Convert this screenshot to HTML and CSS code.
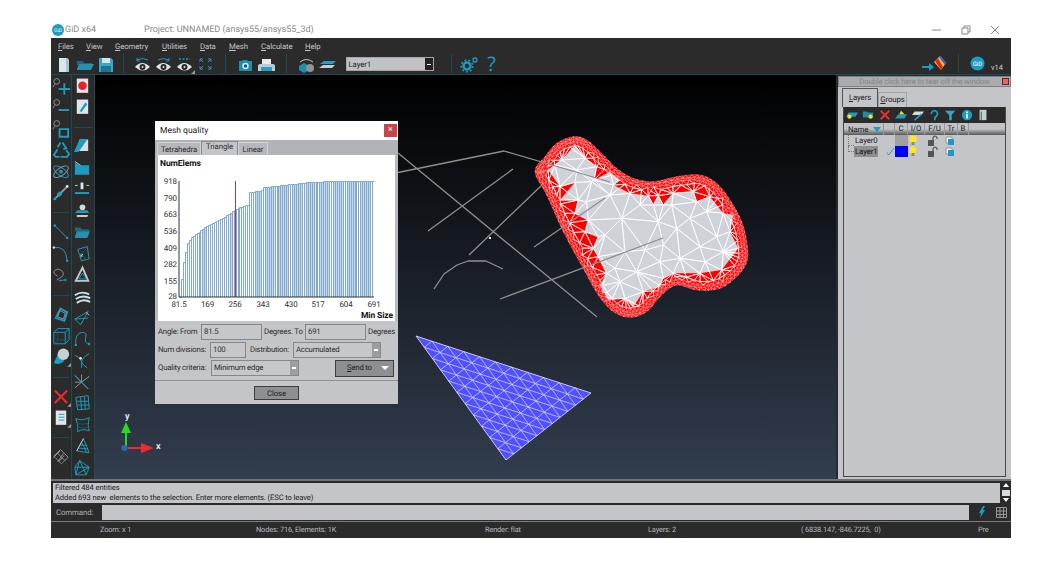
FILE: index.html
```html
<!DOCTYPE html>
<html lang="en">
<head>
<meta charset="utf-8">
<title>GiD x64</title>
<link rel="stylesheet" href="styles.css">
</head>
<body>
<header class="titlebar">
  <svg class="gid-small" viewBox="0 0 12 12"><circle cx="6" cy="6" r="6" fill="#1c9cc0"/><text x="6" y="8" class="gid-t-s">GiD</text></svg>
  <span class="app-name">GiD x64</span>
  <span class="project">Project: UNNAMED (ansys55/ansys55_3d)</span>
  <div class="winctl">
    <svg class="wc" viewBox="0 0 10 10"><path d="M0 5h9" class="wc-l"/></svg>
    <svg class="wc" viewBox="0 0 10 10"><path d="M1 3h6v6H1zM3 3V1h6v6H7" class="wc-l"/></svg>
    <svg class="wc" viewBox="0 0 10 10"><path d="M1 1l8 8M9 1l-8 8" class="wc-l"/></svg>
  </div>
</header>

<div class="app">
  <nav class="menubar">
    <span class="m m-files"><u>F</u>iles</span>
    <span class="m m-view"><u>V</u>iew</span>
    <span class="m m-geo"><u>G</u>eometry</span>
    <span class="m m-util"><u>U</u>tilities</span>
    <span class="m m-data"><u>D</u>ata</span>
    <span class="m m-mesh"><u>M</u>esh</span>
    <span class="m m-calc"><u>C</u>alculate</span>
    <span class="m m-help"><u>H</u>elp</span>
  </nav>

  <div class="toolbar">
    <svg class="ti" viewBox="0 0 21 20"><path d="M6 4h8l2 2v12H6z" fill="#dbe6ea"/><path d="M13 4h1l2 2v12h-3z" fill="#a9c4cf"/></svg>
    <svg class="ti" viewBox="0 0 21 20"><path d="M3 7h6l1 2h8v2H3z" fill="#176a80"/><path d="M3 15l2-5h15l-3 6H3z" fill="#2a8fae"/></svg>
    <svg class="ti" viewBox="0 0 21 20"><path d="M4 4h12l2 2v12H4z" fill="#3aa5c6"/><path d="M7 4h8v5H7z" fill="#d7e3e7"/><path d="M6 12h10v6H6z" fill="#1d7590"/></svg>
    <i class="sep sep-n"></i>
    <svg class="ti" viewBox="0 0 21 20"><path d="M5 6q5-3 11 0" class="s-t"/><path d="M5 4v3h3" class="s-t"/><path d="M3 13q7-8 15 0q-7 7-15 0z" fill="#e3e6e8"/><circle cx="10.500" cy="13" r="3" fill="#2b2b2b"/><circle cx="10.500" cy="13" r="1" fill="#ddd"/></svg>
    <svg class="ti" viewBox="0 0 21 20"><path d="M5 6q5-3 11 0" class="s-t"/><path d="M16 4v3h-3" class="s-t"/><path d="M3 13q7-8 15 0q-7 7-15 0z" fill="#e3e6e8"/><circle cx="10.500" cy="13" r="3" fill="#2b2b2b"/><circle cx="10.500" cy="13" r="1" fill="#ddd"/></svg>
    <svg class="ti" viewBox="0 0 21 20"><path d="M5 5h11" class="s-t s-dot"/><path d="M3 13q7-8 15 0q-7 7-15 0z" fill="#e3e6e8"/><circle cx="10.500" cy="13" r="3" fill="#2b2b2b"/><circle cx="10.500" cy="13" r="1" fill="#ddd"/><path d="M21 16v4h-4z" fill="#9a9a9a"/></svg>
    <svg class="ti" viewBox="0 0 21 20"><path d="M8 8L5 5M5 8V5h3M13 8l3-3M13 5h3v3M8 12l-3 3M5 12v3h3M13 12l3 3M16 12v3h-3" class="s-t"/></svg>
    <i class="sep"></i>
    <svg class="ti" viewBox="0 0 21 20"><path d="M4 7h3l1-1h4l1 1h4v10H4z" fill="#1f8fae"/><circle cx="10.500" cy="12" r="3.200" fill="#dfe8eb"/><circle cx="10.500" cy="12" r="1.700" fill="#16566a"/></svg>
    <svg class="ti" viewBox="0 0 21 20"><path d="M6 5h9v5H6z" fill="#e6eaec"/><path d="M4 10h13q2 0 2 2v5H2v-5q0-2 2-2z" fill="#b8cdd6"/><path d="M5 13h11v4H5z" fill="#2c9dbd"/></svg>
    <i class="sep"></i>
    <svg class="ti" viewBox="0 0 21 20"><path d="M4 8q6-5 13 0" class="s-w"/><path d="M3 12l5-3 5 3v4l-5 3-5-3z" fill="#1f8fae"/><circle cx="14" cy="14" r="4" fill="#8e9498"/></svg>
    <svg class="ti" viewBox="0 0 21 20"><path d="M7 7h12l-3 3H3z" fill="#2a9dbd"/><path d="M6 11h12l-3 3H2z" fill="#b6d2dc"/></svg>
    <div class="tcombo"><span class="tcombo-v">Layer1</span><span class="tcombo-b"></span></div>
    <i class="sep sep-w"></i>
    <svg class="ti" viewBox="0 0 21 20"><circle cx="8" cy="12" r="3.500" fill="none" stroke="#1c9cc0" stroke-width="2.500"/><circle cx="8" cy="12" r="5.800" fill="none" stroke="#1c9cc0" stroke-width="1.500" stroke-dasharray="2 2"/><circle cx="16" cy="6" r="2" fill="none" stroke="#1c9cc0" stroke-width="1.300"/></svg>
    <span class="qmark">?</span>
    <span class="tb-fill"></span>
    <svg class="tb-rain" viewBox="0 0 24 18"><path d="M0 12h10" class="s-t s-2"/><path d="M7 8l5 4-5 4z" fill="#1c9cc0"/><path d="M12 7l6-6 6 7-5 7z" fill="#f0c020"/><path d="M13 6l3-3 5 9-2 3z" fill="#e02828"/><path d="M17 2l2-1 5 7-1 2z" fill="#2c60d8"/></svg>
    <i class="sep sep-r"></i>
    <svg class="tb-gid" viewBox="0 0 16 16"><circle cx="8" cy="8" r="7.500" fill="#1c9cc0"/><text x="8" y="10.300" class="gid-t">GiD</text></svg>
    <span class="ver">v14</span>
  </div>

  <main class="main">
    <div class="col">
      <svg class="li" viewBox="0 0 21 21"><circle cx="6" cy="6" r="3" class="s-g"/><path d="M4 9l-2 3" class="s-g"/><path d="M14 8v12M8 14h12" class="s-t s-2"/></svg>
      <svg class="li" viewBox="0 0 21 21"><circle cx="6" cy="6" r="3" class="s-g"/><path d="M4 9l-2 3" class="s-g"/><path d="M8 14h11" class="s-t s-2"/></svg>
      <svg class="li" viewBox="0 0 21 21"><circle cx="6" cy="5" r="3" class="s-g"/><path d="M4 8l-2 3" class="s-g"/><path d="M9 11h9v8H9z" class="s-t s-2"/></svg>
      <svg class="li" viewBox="0 0 21 21"><path d="M10 3l-3 5M12 3l4 6-3 1M7 10l-4 6 2 2h4M10 18h7l2-3-3-4" class="s-t s-2"/></svg>
      <svg class="li" viewBox="0 0 21 21"><ellipse cx="10.500" cy="10.500" rx="9" ry="4" class="s-t" transform="rotate(35 10.500 10.500)"/><ellipse cx="10.500" cy="10.500" rx="9" ry="4" class="s-g" transform="rotate(-35 10.500 10.500)"/><circle cx="10.500" cy="10.500" r="2" fill="#1c9cc0"/></svg>
      <svg class="li" viewBox="0 0 21 21"><path d="M5 16L16 5" class="s-g s-2"/><circle cx="4" cy="17" r="1.500" fill="#1c9cc0"/><circle cx="17" cy="4" r="1.500" fill="#e0e4e6"/><path d="M9 9l3 3-3 3-3-3z" fill="#1c9cc0"/></svg>
      <i class="hsep"></i>
      <svg class="li" viewBox="0 0 21 21"><path d="M4 4l13 13" class="s-t"/><circle cx="4" cy="4" r="1.300" fill="#1c9cc0"/><circle cx="17" cy="17" r="1.300" fill="#1c9cc0"/></svg>
      <svg class="li" viewBox="0 0 21 21"><path d="M3 4q13-2 14 14" class="s-t"/><circle cx="3" cy="4" r="1.300" fill="#d0d4d6"/><circle cx="17" cy="18" r="1.300" fill="#1c9cc0"/></svg>
      <svg class="li" viewBox="0 0 21 21"><path d="M6 16l5-3q4-3 0-7-4-3-7 0t3 6" class="s-g"/><path d="M8 17l6-1" class="s-t"/><circle cx="15" cy="16" r="1.300" fill="#1c9cc0"/></svg>
      <i class="hsep"></i>
      <svg class="li" viewBox="0 0 21 21"><path d="M10 4l7 4-3 9-9-3z" class="s-t s-2"/><path d="M9 6l6 3-2 6-6-2z" class="s-g"/></svg>
      <svg class="li" viewBox="0 0 21 21"><path d="M3 7h12v12H3zM3 7l4-4h12v12l-4 4M15 7l4-4" class="s-t"/><path d="M7 3v12h12M7 15l-4 4" class="s-dk"/></svg>
      <svg class="li" viewBox="0 0 21 21"><path d="M3 17L8 6l6 9q-5 5-11 2z" fill="#1c9cc0"/><circle cx="13" cy="8" r="6" fill="#c9ced1"/><path d="M21 17v4h-4z" fill="#9a9a9a"/></svg>
      <i class="hsep"></i>
      <svg class="li" viewBox="0 0 21 21"><path d="M4 4l13 13M17 4L4 17" class="s-r"/><path d="M21 17v4h-4z" fill="#9a9a9a"/></svg>
      <svg class="li" viewBox="0 0 21 21"><path d="M5 3h11v15H5z" fill="#dfe5e8"/><path d="M8 7h6M8 10h6M8 13h6" class="s-t"/><path d="M21 17v4h-4z" fill="#9a9a9a"/></svg>
      <i class="hsep"></i>
      <svg class="li" viewBox="0 0 21 21"><path d="M3 10l7-7 8 8-7 7zM6.500 6.500l8 8M9.500 4.500l-7 7M13 7l-6 9M14 9l-6 7" class="s-g"/></svg>
    </div>
    <div class="col col-b">
      <svg class="li" viewBox="0 0 21 21"><path d="M5 3h12v15H5z" fill="#dfe5e8"/><circle cx="11" cy="10.500" r="4.500" fill="#e8202a"/></svg>
      <svg class="li" viewBox="0 0 21 21"><path d="M5 3h12v15H5z" fill="#dfe5e8"/><path d="M8 15l6-9 2 2-6 8z" fill="#1c9cc0"/></svg>
      <i class="hsep"></i>
      <svg class="li" viewBox="0 0 21 21"><path d="M8 3h9v12H4z" fill="#d8dde0"/><path d="M8 3h8l-9 13H2z" fill="#1c9cc0"/></svg>
      <svg class="li" viewBox="0 0 21 21"><path d="M3 5l5 3h10v10H3z" fill="#1c9cc0"/><path d="M3 4l6 4" class="s-w"/></svg>
      <svg class="li" viewBox="0 0 21 21"><path d="M3 6h3M15 6h3" class="s-w"/><path d="M9 3h3v7H9z" fill="#e0e4e6"/><path d="M3 14h15" class="s-t s-2"/></svg>
      <svg class="li" viewBox="0 0 21 21"><circle cx="11" cy="7" r="3" fill="#d5d9db"/><path d="M6 10h10l2 3H3z" fill="#1c9cc0"/><path d="M5 15h12l-1 2H5z" fill="#c8ccce"/></svg>
      <svg class="li" viewBox="0 0 21 21"><path d="M3 6h6l1 2h8v2H3z" fill="#176a80"/><path d="M3 16l2-6h14l-3 7H3z" fill="#2a8fae"/></svg>
      <svg class="li" viewBox="0 0 21 21"><path d="M6 6l10-3 2 13-8 2z" class="s-t"/><circle cx="10" cy="12" r="1.600" fill="#d8dcde"/><path d="M7 9l8 7M15 5l-8 9" class="s-dk"/></svg>
      <svg class="li" viewBox="0 0 21 21"><path d="M11 3L4 17h13z" class="s-w s-2"/><path d="M11 9L7 15h8z" class="s-t"/></svg>
      <svg class="li" viewBox="0 0 21 21"><path d="M3 9q7-5 15-1M4 13q7-5 15-1M5 17q7-5 14-1" class="s-lt s-2"/></svg>
      <svg class="li" viewBox="0 0 21 21"><path d="M3 12L17 4 9 18zM3 12l14-1" class="s-t"/><path d="M15 5l3 3" class="s-w"/></svg>
      <svg class="li" viewBox="0 0 21 21"><path d="M4 17q-1-12 6-13t4 7q0 5 4 5" class="s-t"/><circle cx="4" cy="17" r="1.300" fill="#1c9cc0"/><circle cx="18" cy="16" r="1.300" fill="#1c9cc0"/></svg>
      <svg class="li" viewBox="0 0 21 21"><path d="M3 5q4 1 6 4t1 9M18 3q-4 2-7 6t5 9" class="s-t"/><circle cx="9" cy="8" r="1.500" fill="#e0e4e6"/></svg>
      <svg class="li" viewBox="0 0 21 21"><path d="M3 4l7 7-7 6M10 11l8-6M10 11l7 7M10 11V3M10 11H3" class="s-g"/><path d="M3 4l7 7 7 7M10 11l8-6" class="s-t"/></svg>
      <svg class="li" viewBox="0 0 21 21"><path d="M4 5l13-2 1 14-12 1zM5 9h12M5 13h13M9 4l1 14M13 4l1 13" class="s-t"/></svg>
      <svg class="li" viewBox="0 0 21 21"><path d="M4 4q7 3 14-1-2 8 0 14-7-3-12 1 1-8-2-14z" class="s-t"/><path d="M5 9q7 2 12 0M5 13q7 2 13 0" class="s-dk"/></svg>
      <svg class="li" viewBox="0 0 21 21"><path d="M12 3L5 16l13 2zM9 10h7M7 13l10 1M10 7l5 10" class="s-t"/><path d="M12 3L5 16" class="s-w"/></svg>
      <svg class="li" viewBox="0 0 21 21"><path d="M8 3l10 7-3 8H4l-1-8zM3 10h15M8 3l7 15M8 3L4 18M4 18l14-8" class="s-t"/></svg>
    </div>

    <section class="canvas">
      <svg class="scene" viewBox="95 75 741 404" aria-hidden="true">
        <g id="blob"></g>
        <g id="tri"></g>
        <path class="edge" d="M398 172.500L504 151 610 182M398 153L597 317M428 231L513 169M469 255L542 185M534 247L605 198M500 299L663 238M434 289L444 274 457 265 468 261 486 261 503 269"/>
        <rect x="489" y="237" width="2" height="2" fill="#fff"/>
        <path d="M126 448V431" class="ax-g"/><path d="M121 433l5-11 5 11z" fill="#22dd22"/>
        <path d="M128 448h15" class="ax-r"/><path d="M141 443l13 5-13 5z" fill="#ee2a2a"/>
        <circle cx="124.500" cy="448" r="3" fill="#2b6cb0"/>
        <text x="125" y="419" class="ax-t">y</text>
        <text x="156" y="449" class="ax-t">x</text>
      </svg>

      <div class="dialog">
        <div class="dlg-title"><span>Mesh quality</span><span class="dlg-x">×</span></div>
        <div class="dlg-tabs">
          <span class="dtab dtab-1">Tetrahedra</span>
          <span class="dtab dtab-2 is-on">Triangle</span>
          <span class="dtab dtab-3">Linear</span>
        </div>
        <svg class="chart" viewBox="155 155 243 166">
          <rect x="155" y="155" width="243" height="166" fill="#b8babd"/>
          <rect x="158" y="155" width="237" height="166" fill="#fff"/>
          <text x="160" y="166" class="c-b">NumElems</text>
          <g id="bars"></g>
          <path d="M179 181V297H374" class="c-ax"/>
          <path d="M235.500 181V297" class="c-red"/>
          <g class="c-l c-end">
            <text x="177" y="184">918</text><text x="177" y="201">790</text><text x="177" y="217">663</text><text x="177" y="234">536</text><text x="177" y="251">409</text><text x="177" y="267">282</text><text x="177" y="284">155</text><text x="177" y="299">28</text>
          </g>
          <g class="c-l c-mid">
            <text x="179" y="307">81.5</text><text x="207.500" y="307">169</text><text x="235" y="307">256</text><text x="263" y="307">343</text><text x="291" y="307">430</text><text x="318" y="307">517</text><text x="346" y="307">604</text><text x="374" y="307">691</text>
          </g>
          <text x="393" y="318" class="c-b c-right">Min Size</text>
        </svg>
        <div class="dlg-form">
          <div class="frow"><label class="l-from">Angle: From</label><span class="fld f-61">81.5</span><label class="l-to">Degrees. To</label><span class="fld f-61">691</span><label class="l-deg">Degrees</label></div>
          <div class="frow"><label class="l-num">Num divisions:</label><span class="fld f-36">100</span><label class="l-dist">Distribution:</label><span class="fld f-88">Accumulated<i class="fbtn"></i></span></div>
          <div class="frow"><label class="l-qual">Quality criteria:</label><span class="fld f-88">Minimum edge<i class="fbtn"></i></span><span class="btn btn-send"><span><u>S</u>end to</span><i class="send-arrow"></i></span></div>
        </div>
        <div class="dlg-foot"><span class="btn btn-close">Close</span></div>
      </div>
    </section>

    <aside class="panel">
      <div class="tear"><span>Double click here to tear off the window</span><i class="tear-x"></i></div>
      <div class="pbody">
        <div class="ptabs"><span class="ptab is-on"><u>L</u>ayers</span><span class="ptab"><u>G</u>roups</span></div>
        <div class="pframe">
          <div class="ptools">
            <svg class="pi" viewBox="0 0 16 14"><path d="M4 4h11l-3 5H1z" fill="#1c9cc0"/><circle cx="5" cy="9" r="2.500" fill="#f5e020"/></svg>
            <svg class="pi" viewBox="0 0 16 14"><path d="M2 3h5l1 1h6v6H2z" fill="#1c8aa8"/><circle cx="11" cy="9" r="2.500" fill="#f5e020"/></svg>
            <svg class="pi" viewBox="0 0 16 14"><path d="M3 2l10 10M13 2L3 12" class="s-r"/></svg>
            <svg class="pi" viewBox="0 0 16 14"><path d="M5 6h10l-3 5H1z" fill="#1c9cc0"/><path d="M8 2l4 4H6z" fill="#f5e020"/></svg>
            <svg class="pi" viewBox="0 0 16 14"><path d="M4 3h11l-3 4H1z" fill="#d6dadc"/><path d="M4 13L12 6" class="s-t s-2"/></svg>
            <svg class="pi" viewBox="0 0 16 14"><path d="M5 6a3.500 3.500 0 1 1 6 2l-2 2v3" class="s-t s-2"/></svg>
            <svg class="pi" viewBox="0 0 16 14"><path d="M2 2h12l-4 5v6H7V7z" fill="#3ba6c4"/></svg>
            <svg class="pi" viewBox="0 0 16 14"><circle cx="8" cy="7" r="6" fill="#1c9cc0"/><path d="M7 6h2v5H7zM7 3h2v2H7z" fill="#fff"/></svg>
            <svg class="pi" viewBox="0 0 16 14"><path d="M4 1h8v12H4z" fill="#c9ced1"/><path d="M6 3v10" class="s-dk"/></svg>
          </div>
          <div class="phead">
            <span class="pc pc-name">Name<i class="name-arrow"></i></span><span class="pc"></span><span class="pc">C</span><span class="pc">I/O</span><span class="pc">F/U</span><span class="pc">Tr</span><span class="pc">B</span>
          </div>
          <div class="lrow">
            <i class="tree"></i><span class="lname">Layer0</span><span></span><span class="sw sw-g"></span>
            <svg class="bulb" viewBox="0 0 8 11"><circle cx="4" cy="4" r="3.500" fill="#ffe820"/><path d="M2.500 7h3v3h-3z" fill="#888"/></svg>
            <svg class="lock" viewBox="0 0 12 11"><path d="M1 5h6v6H1z" fill="#555"/><path d="M6 5V2q2-2 4 0v2" class="s-lk"/></svg>
            <svg class="trs" viewBox="0 0 10 10"><path d="M1 1h6v6H1z" fill="#e8eaec" stroke="#777" stroke-width=".6"/><path d="M3 3h6v6H3z" fill="#1c9cc0"/></svg>
          </div>
          <div class="lrow">
            <i class="tree tree-2"></i><span class="lname is-sel">Layer1</span><svg class="chk" viewBox="0 0 10 10"><path d="M1 6l2 3 6-8" class="s-t"/></svg><span class="sw sw-b"></span>
            <svg class="bulb" viewBox="0 0 8 11"><circle cx="4" cy="4" r="3.500" fill="#ffe820"/><path d="M2.500 7h3v3h-3z" fill="#888"/></svg>
            <svg class="lock" viewBox="0 0 12 11"><path d="M1 5h6v6H1z" fill="#555"/><path d="M6 5V2q2-2 4 0v2" class="s-lk"/></svg>
            <svg class="trs" viewBox="0 0 10 10"><path d="M1 1h6v6H1z" fill="#e8eaec" stroke="#777" stroke-width=".6"/><path d="M3 3h6v6H3z" fill="#1c9cc0"/></svg>
          </div>
        </div>
      </div>
    </aside>
  </main>

  <div class="msg">
    <div class="msg-text">
      <div>Filtered 484 entities</div>
      <div>Added 693 new&nbsp; elements to the selection. Enter more elements. (ESC to leave)</div>
    </div>
    <div class="msg-scroll"><i class="sb-up"></i><i class="sb-th"></i><i class="sb-dn"></i></div>
  </div>
  <div class="cmd">
    <label class="cmd-l">Command:</label>
    <span class="cmd-in"></span>
    <svg class="cmd-bolt" viewBox="0 0 8 12"><path d="M5 0L1 7h2L2 12l5-8H5l2-4z" fill="#1c9cc0"/></svg>
    <svg class="cmd-grid" viewBox="0 0 11 11"><path d="M.5.500h10v10H.500zM4 .5v10M7.500.5v10M.5 4h10M.5 7.500h10" fill="none" stroke="#9a9a9a"/></svg>
  </div>
  <footer class="status">
    <span>Zoom: x 1</span><span>Nodes: 716, Elements: 1K</span><span>Render: flat</span><span>Layers: 2</span><span>(&nbsp;6838.147, -846.7225,&nbsp; 0)</span><span>Pre</span>
  </footer>
</div>
<script src="app.js"></script>
</body>
</html>
```

FILE: styles.css
```css
* { box-sizing: border-box; }
html, body { margin: 0; height: 569px; overflow: hidden; background: #fff; }
body { font: 7.800px Roboto, "Liberation Sans", sans-serif; letter-spacing: -.1px; color: #2a2a2a; text-rendering: geometricPrecision; }
i { display: block; font-style: normal; }
svg { display: block; flex: none; }

.titlebar { height: 38px; padding: 24px 0 0 52px; display: flex; align-items: flex-start; color: #8b8b8b; font-size: 9px; line-height: 12px; letter-spacing: 0; }
.gid-small { width: 12px; height: 12px; }
.gid-t-s { font: 5px Roboto, sans-serif; fill: #fff; text-anchor: middle; }
.app-name { margin-left: 1px; width: 79px; }
.winctl { margin-left: auto; display: flex; gap: 19px; padding: 1px 61px 0 0; }
.wc { width: 10px; height: 10px; }
.wc-l { fill: none; stroke: #8a8a8a; stroke-width: 1; }

.app { margin-left: 51px; width: 960px; height: 500px; background: #2b2b2b; display: flex; flex-direction: column; color: #c4c6c8; }

.menubar { height: 15px; flex: none; display: flex; align-items: center; line-height: 15px; padding-top: 1px; background: #2b2b2b; }
.m { display: block; color: #c2c4c6; }
.m-files { margin-left: 7px; width: 28px; }
.m-view { width: 29px; }
.m-geo { width: 47px; }
.m-util { width: 38px; }
.m-data { width: 29px; }
.m-mesh { width: 32px; }
.m-calc { width: 44px; }

.toolbar { height: 22px; flex: none; display: flex; align-items: center; padding-left: 1.500px; border-bottom: 1px solid #1c4a57; }
.ti { width: 21px; height: 20px; }
.sep { width: 1px; height: 19px; background: #1c4a57; margin: 0 9px; }
.sep-n { margin: 0 8px 0 7px; }
.sep-w { margin: 0 7px 0 17px; }
.sep-r { margin: 0 8px; }
.tcombo { width: 88px; height: 14px; margin-left: 8px; display: flex; background: #c0c2c5; color: #222; line-height: 13px; border: 1px solid #a4a6a8; }
.tcombo-v { flex: 1; padding-left: 2px; }
.tcombo-b { width: 8px; background: #222 linear-gradient(#fff,#fff) center 6px / 4px 1px no-repeat; }
.qmark { width: 24px; text-align: center; color: #1c9cc0; font: 20px/22px "Open Sans", sans-serif; }
.tb-fill { flex: 1; }
.tb-rain { width: 24px; height: 18px; margin-right: 4px; }
.tb-gid { width: 15px; height: 15px; margin: 0 4px 0 3px; }
.gid-t { font: 6.500px Roboto, sans-serif; fill: #fff; text-anchor: middle; }
.ver { width: 22px; color: #d0d0d0; font-size: 7.500px; padding: 8px 0 0 2px; line-height: 9px; }

.s-t, .s-w, .s-g, .s-r, .s-dk, .s-lt, .s-lk { fill: none; stroke-width: 1; }
.s-t { stroke: #1c9cc0; }
.s-w { stroke: #c4c9cc; }
.s-g { stroke: #8e9497; }
.s-r { stroke: #ee2c2c; stroke-width: 2.200; }
.s-dk { stroke: #16566a; }
.s-lt { stroke: #c8e4ec; }
.s-lk { stroke: #444; }
.s-2 { stroke-width: 2; }
.s-dot { stroke-width: 1.500; stroke-dasharray: 2 1.500; }

.main { height: 404px; flex: none; display: flex; }
.col { width: 21px; display: flex; flex-direction: column; border-right: 1px solid #1c4a57; flex: none; }
.col-b { width: 23px; }
.li { width: 20px; height: 21.400px; }
.hsep { height: 18px; flex: none; padding: 9px 2px 8px; }
.hsep::before { content: ""; display: block; height: 1px; background: #1c4a57; }

.canvas { flex: 1; position: relative; background: linear-gradient(#000, #323d4e); }
.scene { width: 741px; height: 404px; }
.edge { fill: none; stroke: #8e8e8e; stroke-width: 1.300; stroke-linejoin: round; }
.ax-g { stroke: #22dd22; stroke-width: 2; }
.ax-r { stroke: #ee2a2a; stroke-width: 2; }
.ax-t { font: bold 9px Roboto, sans-serif; fill: #e8e8e8; }

.dialog { position: absolute; left: 60px; top: 46px; width: 243px; height: 283px; display: flex; flex-direction: column; background: #c4c5c8; color: #2e2e2e; }
.dlg-title { height: 19px; background: #fff; display: flex; align-items: center; justify-content: space-between; padding: 0 1px 0 5px; color: #222; font-size: 8.500px; letter-spacing: 0; }
.dlg-x { width: 13px; height: 13px; background: #c8444a; color: #fff; text-align: center; line-height: 13px; font-size: 9px; }
.dlg-tabs { height: 15px; background: #b1b3b6; display: flex; align-items: flex-end; padding-left: 2px; }
.dtab { height: 13px; line-height: 13px; text-align: center; border: 1px solid #d0d2d4; border-bottom: 0; background: #b6b8bb; }
.dtab-1 { width: 44px; }
.dtab-2 { width: 37px; height: 14px; line-height: 10px; }
.dtab-3 { width: 30px; }
.dtab.is-on { background: #c4c5c8; border-color: #8a8c8e; }
.chart { width: 243px; height: 166px; }
.c-b { font: bold 8.500px Roboto, sans-serif; fill: #111; }
.c-right { text-anchor: end; }
.c-l { font: 8px Roboto, sans-serif; fill: #333; }
.c-end { text-anchor: end; }
.c-mid { text-anchor: middle; }
.c-ax { fill: none; stroke: #333; stroke-width: 1; }
.c-red { stroke: #b33a45; stroke-width: 1; }
.bar-f { fill: #c9d9e8; }
.bar-s { fill: none; stroke: #7fa9cf; stroke-width: 1; }

.dlg-form { height: 60px; padding: 3px 0 0 3px; display: flex; flex-direction: column; gap: 2px; border-bottom: 1px solid #8f9194; letter-spacing: -.22px; }
.frow { height: 16px; display: flex; align-items: center; line-height: 16px; white-space: nowrap; }
.fld { height: 16px; padding-left: 2px; position: relative; border: 1px solid #85878a; background: #c6c7ca; line-height: 14px; display: block; }
.f-61 { width: 61px; }
.f-36 { width: 36px; }
.f-88 { width: 88px; }
.fbtn { position: absolute; right: 0; top: 0; width: 8px; height: 14px; background: #9b9da0 linear-gradient(#fff,#fff) center 6px / 4px 2px no-repeat; }
.l-from { width: 43px; }
.l-to { width: 43px; padding-left: 2px; }
.l-deg { padding-left: 2px; }
.l-num { width: 52px; }
.l-dist { width: 47px; padding-left: 4px; }
.l-qual { width: 53px; }
.btn { display: flex; align-items: center; justify-content: center; background: #8d8f93; border: 1px solid #3d3d3d; color: #222; }
.btn-send { width: 59px; height: 17px; margin-left: 36px; justify-content: space-between; padding: 0 4px 0 11px; }
.send-arrow { width: 0; height: 0; border: 4px solid transparent; border-top: 4px solid #fff; border-bottom: 0; }
.dlg-foot { height: 23px; display: flex; justify-content: center; padding-top: 5px; }
.btn-close { width: 45px; height: 14px; }

.panel { width: 175px; flex: none; padding: 1px 0 0 2px; display: flex; flex-direction: column; }
.tear { height: 11px; flex: none; background: #a9abae; color: #84878a; display: flex; justify-content: center; align-items: center; position: relative; border: 1px solid #7d7f82; line-height: 9px; letter-spacing: -.16px; }
.tear-x { position: absolute; right: 1px; top: 1px; width: 7px; height: 7px; border: 1px solid #7c1d1d; background: #d86a6a; }
.pbody { flex: 1; background: #c4c5c8; padding: 1px 5px 2px; display: flex; flex-direction: column; min-height: 0; color: #222; }
.ptabs { height: 19px; flex: none; display: flex; align-items: flex-end; margin-left: -1px; }
.ptab { width: 29px; height: 15px; line-height: 14px; text-align: center; border: 1px solid #a3a5a8; border-bottom: 0; }
.ptab.is-on { width: 36px; height: 19px; line-height: 17px; border-color: #555; }
.pframe { flex: 1; border: 1px solid #4a4a4a; border-top: 0; min-height: 0; }
.ptools { height: 16px; background: #2b2b2b; display: flex; align-items: center; gap: .400px; }
.pi { width: 16px; height: 12px; }
.phead { height: 12px; display: grid; grid-template-columns: 40px 11px 13px 17px 20px 13px 11px; background: linear-gradient(#c0c2c4 50%, #55575a); line-height: 11px; }
.pc { text-align: center; border-right: 1px solid #97999c; }
.pc-name { display: flex; align-items: center; padding-left: 4px; gap: 5px; }
.name-arrow { width: 0; height: 0; border: 4px solid transparent; border-top: 5px solid #1c9cc0; border-bottom: 0; }
.lrow { height: 11px; display: grid; grid-template-columns: 10px 30px 11px 13px 17px 20px 1fr; line-height: 11px; align-items: center; }
.lname { padding-left: 1px; }
.lname.is-sel { background: #8f8f8f; margin-right: 6px; color: #111; }
.tree { height: 11px; margin-left: 4px; border-left: 1px dotted #7a7a7a; border-bottom: 1px dotted #7a7a7a; }
.tree-2 { height: 6px; align-self: start; }
.chk { width: 9px; height: 9px; margin-left: 2px; }
.sw { height: 11px; display: block; }
.sw-g { background: #a0a0a0; }
.sw-b { background: #0000ff; }
.bulb { width: 8px; height: 11px; margin-left: 1px; }
.lock { width: 12px; height: 11px; margin-left: 2px; }
.trs { width: 10px; height: 10px; }

.msg { height: 24px; flex: none; display: flex; padding-top: 2px; border-top: 2px solid #6f7276; background: #2b2b2b; }
.msg-text { flex: 1; background: #c3c5c8; color: #1d1d1d; padding-left: 2px; line-height: 10px; margin-left: 2px; font-size: 7.600px; letter-spacing: -.1px; }
.msg-scroll { width: 11px; display: flex; flex-direction: column; align-items: center; justify-content: space-between; padding: 0 0 1px; }
.sb-up, .sb-dn { width: 0; height: 0; border: 3.500px solid transparent; }
.sb-up { border-bottom: 4px solid #fff; border-top: 0; }
.sb-dn { border-top: 4px solid #fff; border-bottom: 0; }
.sb-th { width: 8px; height: 6px; background: #d8dadc; }

.cmd { height: 19px; flex: none; display: flex; align-items: center; border-bottom: 1px solid #7b7d80; }
.cmd-l { width: 51px; padding-left: 5px; color: #aeb0b3; }
.cmd-in { width: 867px; height: 15px; background: #c3c5c8; }
.cmd-bolt { width: 8px; height: 12px; margin-left: 9px; }
.cmd-grid { width: 11px; height: 11px; margin-left: 10px; }

.status { height: 16px; flex: none; display: grid; grid-template-columns: 156px 229px 163px 153px 177px 1fr; padding-left: 49px; align-items: center; color: #b6b8bb; line-height: 14px; font-size: 7.400px; letter-spacing: -.15px; }
```

FILE: app.js
```js
(function () {
  var NS = 'http://www.w3.org/2000/svg';
  function add(parent, cls, d, attrs) {
    var p = document.createElementNS(NS, 'path');
    if (cls) p.setAttribute('class', cls);
    p.setAttribute('d', d);
    for (var k in (attrs || {})) p.setAttribute(k, attrs[k]);
    parent.appendChild(p);
  }

  /* ---- histogram of the dialog ---- */
  var curve = [[179,297],[180,288],[183,261],[185,251],[187,242],[190,238],[195,234],[202,229],[208,225],[216,221],[225,216],[232,211],[236,209],[245,205],[248,205],[249,192],[260,191],[263,187],[275,186],[283,185],[293,184],[300,183],[308,182],[322,181.5],[348,181],[374,181]];
  function yAt(x) {
    for (var i = 1; i < curve.length; i++) {
      if (x <= curve[i][0]) {
        var a = curve[i - 1], b = curve[i];
        return a[1] + (b[1] - a[1]) * (x - a[0]) / ((b[0] - a[0]) || 1);
      }
    }
    return 181;
  }
  var fill = '', stroke = '';
  for (var i = 0; i < 100; i++) {
    var x = 179 + i * 1.95, y = Math.round(yAt(x)) + 0.5;
    if ((i % 7 > 1 && x > 255) || (i % 14 > 11)) fill += 'M' + x.toFixed(2) + ' ' + y + 'h1.95V297h-1.95z';
    stroke += 'M' + Math.round(x) + '.5 297V' + y + 'h1.95';
  }
  var bars = document.getElementById('bars');
  add(bars, 'bar-f', fill);
  add(bars, 'bar-s', stroke);

  /* ---- blue triangle mesh ---- */
  var A = [416, 336], B = [591, 393], C = [506, 460], n = 11, d = '';
  function bary(u, v) {
    var w = 1 - u - v;
    return (A[0] * u + B[0] * v + C[0] * w).toFixed(1) + ' ' + (A[1] * u + B[1] * v + C[1] * w).toFixed(1);
  }
  for (var k = 1; k < n; k++) {
    var t = k / n;
    d += 'M' + bary(t, 0) + 'L' + bary(t, 1 - t);
    d += 'M' + bary(0, t) + 'L' + bary(1 - t, t);
    d += 'M' + bary(t, 0) + 'L' + bary(0, t);
  }
  var tri = document.getElementById('tri');
  add(tri, '', 'M416 336L591 393 506 460z', { fill: '#5050ff', stroke: '#e8e8ff', 'stroke-width': '0.8' });
  add(tri, '', d, { fill: 'none', stroke: '#dfe0ff', 'stroke-width': '0.7' });

  /* ---- red / grey blob mesh ---- */
  function z(list) { return list.map(function (p) { return [520 + p[0] / 3, 125 + p[1] / 3]; }); }
  var outer = z([[45,140],[75,95],[110,55],[160,35],[200,45],[245,85],[290,130],[340,160],[400,170],[470,155],[540,150],[590,175],[630,225],[665,290],[680,350],[682,405],[655,450],[600,490],[530,495],[470,480],[425,510],[380,560],[330,577],[280,560],[235,510],[195,440],[130,320],[80,210]]);
  var inner = z([[105,120],[125,105],[165,60],[195,100],[230,125],[222,165],[270,140],[300,165],[280,180],[330,205],[385,212],[400,240],[415,212],[430,240],[460,205],[520,200],[530,230],[570,215],[610,265],[640,270],[630,320],[655,370],[605,435],[540,445],[460,445],[430,460],[420,485],[370,500],[340,545],[315,520],[265,525],[240,480],[260,445],[235,395],[220,370],[235,335],[195,320],[205,285],[165,265],[175,225],[120,225],[165,172],[120,185],[85,135]]);
  var interior = z([[305,280],[415,290],[510,280],[590,335],[540,365],[470,310],[375,375],[315,380],[255,330],[270,210],[215,170],[170,135],[360,240],[455,240],[560,260],[480,400],[555,410],[420,410],[285,430],[350,440],[300,470],[430,360],[610,380],[200,230]]);

  function spline(pts, steps) {
    var out = [], m = pts.length;
    for (var i = 0; i < m; i++) {
      var p0 = pts[(i - 1 + m) % m], p1 = pts[i], p2 = pts[(i + 1) % m], p3 = pts[(i + 2) % m];
      for (var s = 0; s < steps; s++) {
        var t = s / steps, t2 = t * t, t3 = t2 * t, q = [];
        for (var c = 0; c < 2; c++) {
          q[c] = 0.5 * (2 * p1[c] + (p2[c] - p0[c]) * t + (2 * p0[c] - 5 * p1[c] + 4 * p2[c] - p3[c]) * t2 + (3 * p1[c] - p0[c] - 3 * p2[c] + p3[c]) * t3);
        }
        out.push(q);
      }
    }
    return out;
  }
  function inside(p, poly) {
    var c = false;
    for (var i = 0, j = poly.length - 1; i < poly.length; j = i++) {
      if ((poly[i][1] > p[1]) !== (poly[j][1] > p[1]) &&
          p[0] < (poly[j][0] - poly[i][0]) * (p[1] - poly[i][1]) / (poly[j][1] - poly[i][1]) + poly[i][0]) c = !c;
    }
    return c;
  }
  var seed = 12345;
  function rnd() { seed = (seed * 1103515245 + 12345) & 0x7fffffff; return seed / 0x7fffffff; }

  var curveO = spline(outer, 8);
  function resample(pts, gap, offset) {
    var res = [], acc = gap, m = pts.length;
    for (var i = 0; i < m; i++) {
      var a = pts[i], b = pts[(i + 1) % m], dx = b[0] - a[0], dy = b[1] - a[1], len = Math.hypot(dx, dy) || 1;
      acc += len;
      if (acc >= gap) {
        acc = 0;
        var j = offset ? (rnd() - 0.5) * 0.8 : 0;
        res.push([a[0] - dy / len * (offset + j), a[1] + dx / len * (offset + j)]);
      }
    }
    return res;
  }
  var nodes = resample(curveO, 3, 0)
    .concat(resample(curveO, 3.2, 2.6))
    .concat(resample(curveO, 3.8, 5.4))
    .concat(resample(curveO, 6, 9))
    .concat(inner).concat(interior);

  function circum(a, b, c) {
    var D = 2 * (a[0] * (b[1] - c[1]) + b[0] * (c[1] - a[1]) + c[0] * (a[1] - b[1]));
    if (Math.abs(D) < 1e-9) D = 1e-9;
    var A2 = a[0] * a[0] + a[1] * a[1], B2 = b[0] * b[0] + b[1] * b[1], C2 = c[0] * c[0] + c[1] * c[1];
    var ux = (A2 * (b[1] - c[1]) + B2 * (c[1] - a[1]) + C2 * (a[1] - b[1])) / D;
    var uy = (A2 * (c[0] - b[0]) + B2 * (a[0] - c[0]) + C2 * (b[0] - a[0])) / D;
    return [ux, uy, (a[0] - ux) * (a[0] - ux) + (a[1] - uy) * (a[1] - uy)];
  }
  var N = nodes.length, P = nodes.concat([[-5000, -5000], [7000, -5000], [1000, 7000]]);
  function mk(a, b, c) { return { v: [a, b, c], o: circum(P[a], P[b], P[c]) }; }
  var tris = [mk(N, N + 1, N + 2)];
  for (var pi = 0; pi < N; pi++) {
    var p = P[pi], keep = [], edges = {};
    for (var ti = 0; ti < tris.length; ti++) {
      var tr = tris[ti], o = tr.o;
      if ((p[0] - o[0]) * (p[0] - o[0]) + (p[1] - o[1]) * (p[1] - o[1]) < o[2]) {
        for (var e = 0; e < 3; e++) {
          var a = tr.v[e], b = tr.v[(e + 1) % 3], key = a < b ? a + '_' + b : b + '_' + a;
          edges[key] = edges[key] ? 0 : [a, b];
        }
      } else keep.push(tr);
    }
    for (var ke in edges) if (edges[ke]) keep.push(mk(edges[ke][0], edges[ke][1], pi));
    tris = keep;
  }

  function pathOf(list) {
    return 'M' + list.map(function (q) { return q[0].toFixed(1) + ' ' + q[1].toFixed(1); }).join('L') + 'z';
  }
  var fine = '', coarse = '';
  tris.forEach(function (tr) {
    if (tr.v[0] >= N || tr.v[1] >= N || tr.v[2] >= N) return;
    var a = P[tr.v[0]], b = P[tr.v[1]], c = P[tr.v[2]];
    var g = [(a[0] + b[0] + c[0]) / 3, (a[1] + b[1] + c[1]) / 3];
    if (!inside(g, curveO)) return;
    var area = Math.abs((b[0] - a[0]) * (c[1] - a[1]) - (c[0] - a[0]) * (b[1] - a[1])) / 2;
    if (area < 14) fine += pathOf([a, b, c]); else coarse += pathOf([a, b, c]);
  });
  var blob = document.getElementById('blob');
  add(blob, '', pathOf(curveO), { fill: '#ff0000' });
  add(blob, '', pathOf(inner), { fill: '#d0d2da' });
  add(blob, '', fine, { fill: 'none', stroke: '#ffc0c0', 'stroke-width': '0.3' });
  add(blob, '', coarse, { fill: 'none', stroke: '#ffffff', 'stroke-width': '0.7' });
})();
```
